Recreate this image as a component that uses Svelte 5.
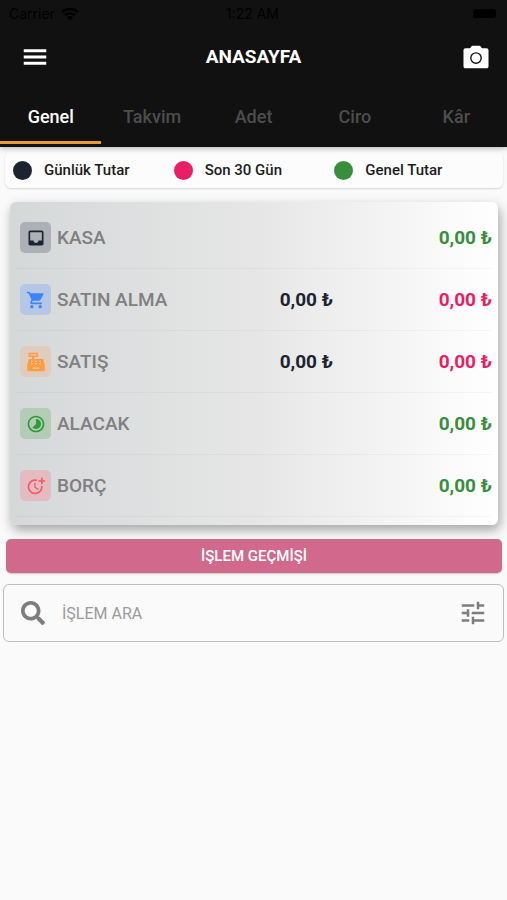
<script>
  let active = $state('Genel')
  let query = $state('')

  const tabs = ['Genel', 'Takvim', 'Adet', 'Ciro', 'Kâr']

  const legend = [
    { label: 'Günlük Tutar', tone: 'day' },
    { label: 'Son 30 Gün', tone: 'month' },
    { label: 'Genel Tutar', tone: 'total' }
  ]

  const rows = [
    { label: 'KASA', icon: 'inbox', daily: '', amount: '0,00 ₺', tone: 'total' },
    { label: 'SATIN ALMA', icon: 'cart', daily: '0,00 ₺', amount: '0,00 ₺', tone: 'month' },
    { label: 'SATIŞ', icon: 'register', daily: '0,00 ₺', amount: '0,00 ₺', tone: 'month' },
    { label: 'ALACAK', icon: 'timelapse', daily: '', amount: '0,00 ₺', tone: 'total' },
    { label: 'BORÇ', icon: 'more-time', daily: '', amount: '0,00 ₺', tone: 'total' }
  ]
</script>

<header>
  <div class="status">
    <span class="carrier">
      Carrier
      <svg width="18" height="14" viewBox="0 0 18 14" aria-hidden="true">
        <path d="M1 5a12 12 0 0 1 16 0M4 8.300a7.500 7.500 0 0 1 10 0" fill="none" stroke="currentColor" stroke-width="2.400" />
        <path d="M9 13.500 6 10.300a4.500 4.500 0 0 1 6 0z" fill="currentColor" />
      </svg>
    </span>
    <span>1:22 AM</span>
    <span class="battery"></span>
  </div>

  <div class="bar">
    <button class="icon-button" aria-label="Menü">
      <svg width="30" height="30" viewBox="0 0 24 24" fill="currentColor">
        <path d="M3 18.200h18v-2.400H3v2.400zm0-5h18v-2.400H3v2.400zm0-7.400v2.400h18V5.800H3z" />
      </svg>
    </button>
    <h1>ANASAYFA</h1>
    <button class="icon-button" aria-label="Kamera">
      <svg width="30" height="30" viewBox="0 0 24 24" fill="currentColor">
        <path fill-rule="evenodd" d="M20.500 5h-3.700L15.700 3.500c-.2-.3-.5-.5-.9-.5H9.200c-.4 0-.7.2-.9.5L7.200 5H3.500C2.700 5 2 5.700 2 6.500v13c0 .8.7 1.500 1.500 1.500h17c.8 0 1.500-.7 1.500-1.500v-13c0-.8-.7-1.500-1.500-1.500zM12 17.500a4.700 4.700 0 1 1 0-9.400 4.700 4.700 0 0 1 0 9.400zM12 16.400a3.600 3.600 0 1 0 0-7.200 3.600 3.600 0 0 0 0 7.200z" />
      </svg>
    </button>
  </div>

  <nav>
    {#each tabs as tab}
      <button class="tab" class:active={tab == active} onclick={() => (active = tab)}>{tab}</button>
    {/each}
  </nav>
</header>

<main>
  <ul class="legend">
    {#each legend as item}
      <li><span class="dot {item.tone}"></span>{item.label}</li>
    {/each}
  </ul>

  <div class="card">
    <table>
      <tbody>
        {#each rows as row}
          <tr>
            <th scope="row">
              <div class="name">
                <span class="badge {row.icon}">
                  <svg width="20" height="20" viewBox="0 0 24 24" fill="currentColor" aria-hidden="true">
                    {#if row.icon == 'inbox'}
                      <path d="M19 3H5c-1.100 0-2 .9-2 2v14c0 1.100.9 2 2 2h14c1.100 0 2-.9 2-2V5c0-1.100-.9-2-2-2zm0 12h-4c0 1.660-1.350 3-3 3s-3-1.340-3-3H5V5h14v10z" />
                    {:else if row.icon == 'cart'}
                      <path d="M7 18c-1.100 0-1.990.9-1.990 2S5.900 22 7 22s2-.9 2-2-.9-2-2-2zM1 2v2h2l3.600 7.590-1.350 2.450c-.16.280-.25.610-.25.960 0 1.100.9 2 2 2h12v-2H7.420c-.14 0-.25-.11-.25-.25l.03-.12.900-1.630h7.450c.75 0 1.410-.41 1.750-1.030l3.580-6.490A1 1 0 0 0 20 4H5.210l-.94-2H1zm16 16c-1.100 0-1.990.9-1.990 2s.89 2 1.990 2 2-.9 2-2-.9-2-2-2z" />
                    {:else if row.icon == 'register'}
                      <path fill-rule="evenodd" d="M3 1h11.500v5H10v2.500h10.500L22.500 15v8h-21v-8l2-6.500H7V6H3zM5 2.800v1.400h7.500V2.800zM6 10.500v1.500h2v-1.500zm5 0v1.500h2v-1.500zm5 0v1.500h2v-1.500zM6 13.500V15h2v-1.500zm5 0V15h2v-1.500zm5 0V15h2v-1.500zM8 18.500V20h8v-1.500z" />
                    {:else if row.icon == 'timelapse'}
                      <path d="M16.240 7.760A5.974 5.974 0 0 0 12 6v6l-4.240 4.240c2.340 2.340 6.140 2.340 8.490 0a5.990 5.990 0 0 0-.01-8.480zM12 2C6.480 2 2 6.480 2 12s4.480 10 10 10 10-4.480 10-10S17.520 2 12 2zm0 18c-4.420 0-8-3.580-8-8s3.580-8 8-8 8 3.580 8 8-3.580 8-8 8z" />
                    {:else}
                      <path d="M10 8v6l4.700 2.900.8-1.200-4-2.400V8z" />
                      <path d="M17.920 12c.05.330.08.660.08 1 0 3.900-3.100 7-7 7s-7-3.100-7-7 3.100-7 7-7c.7 0 1.370.1 2 .290V4.230c-.64-.15-1.310-.23-2-.23-5 0-9 4-9 9s4 9 9 9 9-4 9-9c0-.34-.02-.67-.06-1h-2.020z" />
                      <path d="M20 5V2h-2v3h-3v2h3v3h2V7h3V5z" />
                    {/if}
                  </svg>
                </span>
                {row.label}
              </div>
            </th>
            <td class="day">{row.daily}</td>
            <td class={row.tone}>{row.amount}</td>
          </tr>
        {/each}
      </tbody>
    </table>
  </div>

  <button class="history">İŞLEM GEÇMİŞİ</button>

  <div class="search">
    <svg width="24" height="24" viewBox="0 0 512 512" fill="currentColor" aria-hidden="true">
      <path d="M505 442.700 405.300 343c-4.500-4.500-10.600-7-17-7H372c27.600-35.300 44-79.700 44-128C416 93.100 322.900 0 208 0S0 93.100 0 208s93.100 208 208 208c48.300 0 92.700-16.400 128-44v16.300c0 6.400 2.500 12.500 7 17l99.700 99.700c9.400 9.400 24.600 9.400 33.900 0l28.300-28.300c9.400-9.400 9.400-24.600.1-34zM208 336c-70.700 0-128-57.200-128-128 0-70.700 57.200-128 128-128 70.700 0 128 57.200 128 128 0 70.700-57.200 128-128 128z" />
    </svg>
    <input type="text" placeholder="İŞLEM ARA" aria-label="İşlem ara" bind:value={query} />
    <button class="icon-button" aria-label="Filtrele">
      <svg width="30" height="30" viewBox="0 0 24 24" fill="currentColor">
        <path d="M3 17v2h6v-2H3zM3 5v2h10V5H3zm10 16v-2h8v-2h-8v-2h-2v6h2zM7 9v2H3v2h4v2h2V9H7zm14 4v-2H11v2h10zm-6-4h2V7h4V5h-4V3h-2v6z" />
      </svg>
    </button>
  </div>
</main>

<style>
  :global(body) {
    background: #fafafa;
    font-family: Roboto, sans-serif;
  }

  button {
    padding: 0;
    border: 0;
    background: none;
    color: inherit;
    font-family: inherit;
    cursor: pointer;
  }

  svg {
    display: block;
  }

  header {
    position: relative;
    padding-bottom: 3px;
    background: #111;
    color: #fff;
    box-shadow: 0 1px 6px rgba(0, 0, 0, 0.3);
  }

  .status {
    display: grid;
    grid-template-columns: 1fr auto 1fr;
    align-items: center;
    height: 27px;
    padding: 0 11px 0 9px;
    color: #000;
    font-family: Inter, sans-serif;
    font-size: 14px;
  }

  .carrier {
    display: flex;
    align-items: center;
    gap: 6px;
  }

  .battery {
    justify-self: end;
    width: 23px;
    height: 9px;
    border-radius: 3px;
    background: #000;
  }

  .bar {
    display: flex;
    align-items: center;
    justify-content: space-between;
    height: 60px;
    padding: 0 16px 0 20px;
  }

  h1 {
    margin: 0;
    padding: 0 4px 2px 0;
    font-size: 19px;
    font-weight: 700;
  }

  nav {
    display: flex;
  }

  .tab {
    flex: 1;
    height: 57px;
    padding-top: 5px;
    border-bottom: 3px solid transparent;
    color: #4d4d4d;
    font-size: 18px;
    font-weight: 500;
  }

  .tab.active {
    border-bottom-color: #e89b33;
    color: #fff;
  }

  main {
    display: flex;
    flex-direction: column;
    padding: 5px 3px;
  }

  .legend {
    display: grid;
    grid-template-columns: repeat(3, 1fr);
    align-items: center;
    height: 36px;
    margin: 0 1px 14px 2px;
    padding: 0 8px;
    border-radius: 6px;
    background: #fcfcfc;
    box-shadow: 0 1px 2px rgba(0, 0, 0, 0.15);
    color: #1c1c1c;
    font-size: 15px;
    font-weight: 500;
    list-style: none;
  }

  .legend li {
    display: flex;
    align-items: center;
    gap: 12px;
  }

  .dot {
    width: 19px;
    height: 19px;
    border-radius: 50%;
    background: currentColor;
  }

  .day {
    color: #1b2430;
  }

  .month {
    color: #e91e63;
  }

  .total {
    color: #388e3c;
  }

  .card {
    margin: 0 6px 14px 7px;
    padding: 5px 6px 8px 5px;
    border-radius: 6px;
    background: linear-gradient(to right, #d5d8d9, #e6e6e6 50%, #fff);
    box-shadow: 2px 5px 12px rgba(0, 0, 0, 0.35);
  }

  table {
    width: 100%;
    border-collapse: collapse;
    table-layout: fixed;
  }

  th,
  td {
    height: 61px;
    padding: 0;
    border-bottom: 1px solid rgba(0, 0, 0, 0.03);
    font-size: 19px;
    font-weight: 700;
    text-align: right;
    white-space: nowrap;
  }

  th {
    color: #808080;
    font-weight: 500;
    text-align: left;
  }

  .name {
    display: flex;
    align-items: center;
    gap: 6px;
    padding-left: 5px;
  }

  .badge {
    display: flex;
    align-items: center;
    justify-content: center;
    width: 31px;
    height: 31px;
    border-radius: 5px;
  }

  .inbox {
    background: #adb1b7;
    color: #1b2430;
  }

  .cart {
    background: #b6c7e6;
    color: #3d84fb;
  }

  .register {
    background: #dfccbd;
    color: #ff9c42;
  }

  .timelapse {
    background: #b2ccb6;
    color: #2e9a3a;
  }

  .more-time {
    background: #e3bcc2;
    color: #fa5560;
  }

  .history {
    height: 34px;
    margin: 0 2px 11px 3px;
    border-radius: 5px;
    background: #d0698c;
    box-shadow: 0 1px 2px rgba(0, 0, 0, 0.2);
    color: #fff;
    font-size: 15px;
    font-weight: 500;
  }

  .search {
    display: flex;
    align-items: center;
    height: 56px;
    padding: 0 15px 0 17px;
    border: 1px solid #bdbdbd;
    border-radius: 6px;
    color: #7d7d7d;
  }

  input {
    flex: 1;
    min-width: 0;
    padding: 0 17px;
    border: 0;
    outline: 0;
    background: none;
    color: #333;
    font-family: inherit;
    font-size: 16px;
  }

  input::placeholder {
    color: #9a9a9a;
  }
</style>
